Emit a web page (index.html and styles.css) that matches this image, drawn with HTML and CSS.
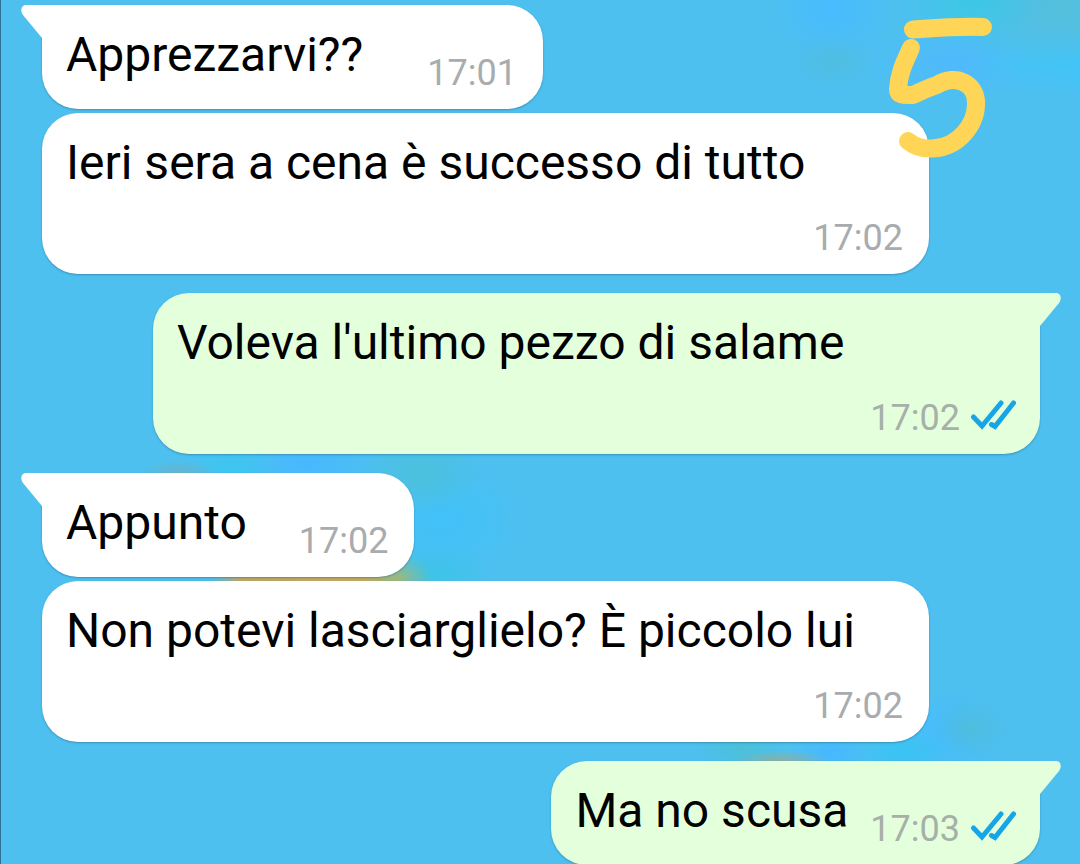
FILE: index.html
```html
<!DOCTYPE html>
<html lang="it">
<head>
<meta charset="utf-8">
<meta name="viewport" content="width=device-width, initial-scale=1">
<title>Chat</title>
<link rel="stylesheet" href="styles.css">
</head>
<body>
<svg class="defs" width="0" height="0" aria-hidden="true">
  <symbol id="tail-left" viewBox="0 0 22 34"><path d="M22 0H5C0 0-1 6 2 10L21 33H22Z"/></symbol>
  <symbol id="tail-right" viewBox="0 0 22 34"><path d="M0 0H17C22 0 23 6 20 10L1 33H0Z"/></symbol>
  <symbol id="ticks" viewBox="0 0 46 36"><path d="M3.5 17L12 26L31 3M21.500 24.500L25 26.500L43.500 3"/></symbol>
</svg>
<main class="chat">
  <div class="group">
    <article class="bubble in inline gap-large">
      <svg class="tail" aria-hidden="true"><use href="#tail-left"/></svg>
      <p class="text">Apprezzarvi??</p>
      <div class="meta"><time>17:01</time></div>
    </article>
    <article class="bubble in stacked">
      <p class="text">Ieri sera a cena è successo di tutto</p>
      <div class="meta"><time>17:02</time></div>
    </article>
  </div>
  <div class="group">
    <article class="bubble out stacked">
      <svg class="tail" aria-hidden="true"><use href="#tail-right"/></svg>
      <p class="text">Voleva l'ultimo pezzo di salame</p>
      <div class="meta"><time>17:02</time><svg class="ticks" role="img" aria-label="Letto"><use href="#ticks"/></svg></div>
    </article>
  </div>
  <div class="group">
    <article class="bubble in inline gap-medium">
      <svg class="tail" aria-hidden="true"><use href="#tail-left"/></svg>
      <p class="text">Appunto</p>
      <div class="meta"><time>17:02</time></div>
    </article>
    <article class="bubble in stacked">
      <p class="text">Non potevi lasciarglielo? È piccolo lui</p>
      <div class="meta"><time>17:02</time></div>
    </article>
  </div>
  <div class="group">
    <article class="bubble out inline">
      <svg class="tail" aria-hidden="true"><use href="#tail-right"/></svg>
      <p class="text">Ma no scusa</p>
      <div class="meta"><time>17:03</time><svg class="ticks" role="img" aria-label="Letto"><use href="#ticks"/></svg></div>
    </article>
  </div>
  <svg class="doodle" viewBox="0 0 110 150" role="img" aria-label="5">
    <path d="M23 19.500C45 18 68 16 93 17M21 38C14 53 9 63 8 79C8 86 14 85 23 85C30 82 37 78 47 75C66 63 87 74 86 94C86 114 69 137 43 138.500C34 139 25 137 18 131"/>
  </svg>
</main>
</body>
</html>
```
FILE: styles.css
```css
* {
  box-sizing: border-box;
}

body {
  margin: 0;
  background: #4dc0f0;
  font-family: Roboto, "Noto Sans", sans-serif;
}

.defs {
  position: absolute;
}

.chat {
  position: relative;
  display: flex;
  flex-direction: column;
  gap: 19px;
  height: 100vh;
  overflow: hidden;
  padding: 5px 40px 0 41px;
  border-left: 1px solid #2b7296;
  background:
    radial-gradient(ellipse 70px 50px at 970px 0, #3cc8e4, transparent),
    radial-gradient(ellipse 110px 60px at 1060px 10px, #55bfdc, transparent),
    radial-gradient(ellipse 110px 36px at 1070px 60px, #40c5fa, transparent),
    radial-gradient(ellipse 90px 40px at 950px 62px, #50b9fc, transparent),
    radial-gradient(ellipse 60px 50px at 832px 8px, #48bcff, transparent),
    radial-gradient(ellipse 40px 30px at 832px 60px, #50bee0, transparent),
    radial-gradient(ellipse 40px 14px at 178px 474px, #68b2c8, transparent),
    radial-gradient(ellipse 50px 30px at 230px 466px, #3cc6f0, transparent),
    radial-gradient(ellipse 70px 40px at 305px 464px, #48b8ff, transparent),
    radial-gradient(ellipse 60px 40px at 420px 474px, #4cc0dc, transparent),
    radial-gradient(ellipse 80px 60px at 440px 520px, #40c2fa, transparent),
    radial-gradient(ellipse 36px 26px at 395px 577px, #9cb87c, transparent),
    linear-gradient(to right, transparent 210px, #c0a864 240px, #c8a95c 380px, transparent 410px) 0 576px / 100% 6px no-repeat,
    radial-gradient(ellipse 60px 30px at 430px 572px, #3cc4e4, transparent),
    radial-gradient(ellipse 50px 12px at 780px 762px, #8fae9c, transparent),
    radial-gradient(ellipse 50px 24px at 740px 748px, #4cc0d8, transparent),
    radial-gradient(ellipse 40px 24px at 830px 752px, #46b8ff, transparent),
    radial-gradient(ellipse 50px 24px at 900px 752px, #38c4f4, transparent),
    radial-gradient(ellipse 40px 30px at 970px 728px, #50bedc, transparent),
    radial-gradient(ellipse 60px 40px at 945px 732px, #46bcff, transparent),
    #4dc0f0;
}

.group {
  display: flex;
  flex-direction: column;
  gap: 4px;
}

.bubble {
  position: relative;
  display: flex;
  padding: 22px 26px 15px 24px;
  border-radius: 36px;
  box-shadow: 0 1px 2px rgba(40, 100, 130, 0.5);
}

.in {
  align-self: flex-start;
  background: #fff;
  fill: #fff;
}

.out {
  align-self: flex-end;
  padding-right: 24px;
  background: #e4ffdc;
  fill: #e4ffdc;
}

.inline {
  gap: 22px;
  min-height: 104px;
}

.gap-large {
  gap: 64px;
}

.gap-medium {
  gap: 52px;
}

.stacked {
  flex-direction: column;
  gap: 26px;
  width: 100%;
  max-width: 887px;
}

.in:has(.tail) {
  border-top-left-radius: 0;
}

.out:has(.tail) {
  border-top-right-radius: 0;
}

.tail {
  position: absolute;
  top: 0;
  width: 22px;
  height: 34px;
}

.in .tail {
  left: -21px;
}

.out .tail {
  right: -21px;
}

.text {
  margin: 0;
  color: #000;
  font-size: 48px;
  line-height: 56px;
}

.meta {
  display: flex;
  align-self: flex-end;
  align-items: center;
  gap: 10px;
  color: #a8acaf;
  font-size: 36px;
  line-height: 42px;
}

.ticks {
  width: 46px;
  height: 36px;
  fill: none;
  stroke: #16a5e6;
  stroke-width: 5px;
  stroke-linecap: round;
}

.out .meta {
  color: #a6b0a9;
}

.doodle {
  position: absolute;
  top: 10px;
  right: 80px;
  width: 110px;
  height: 150px;
  overflow: visible;
  fill: none;
  stroke: #ffd557;
  stroke-width: 18px;
  stroke-linecap: round;
  stroke-linejoin: round;
}
```
